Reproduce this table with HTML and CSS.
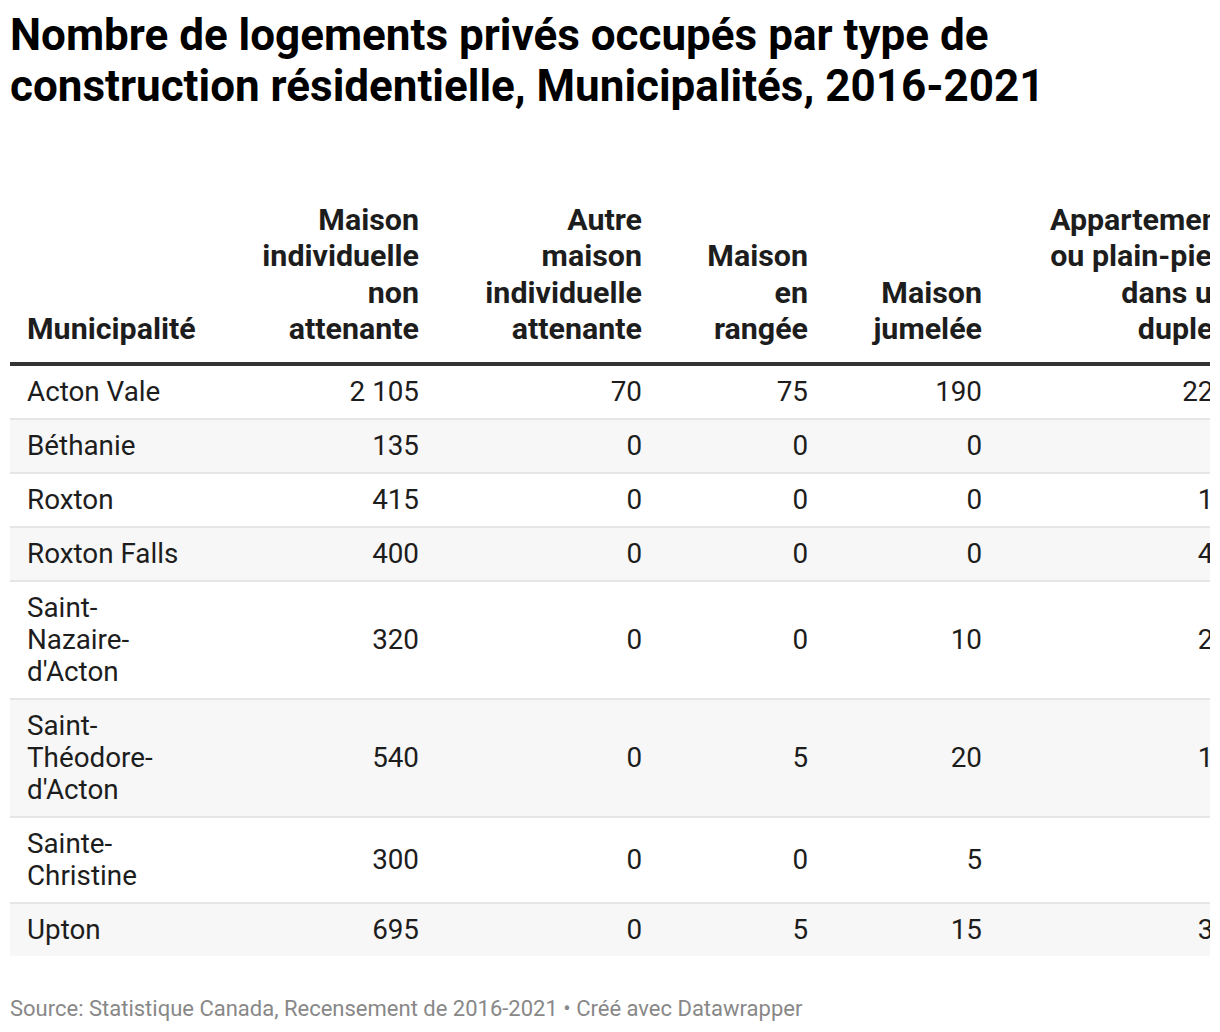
FILE: index.html
```html
<!DOCTYPE html>
<html lang="fr">
<head>
<meta charset="utf-8">
<title>Nombre de logements privés occupés</title>
<link rel="stylesheet" href="styles.css">
</head>
<body>
<div class="chart">
  <h1 class="title">Nombre de logements privés occupés par type de construction résidentielle, Municipalités, 2016-2021</h1>
  <div class="table-wrap">
    <table class="data">
      <colgroup>
        <col class="c-name">
        <col class="c-2">
        <col class="c-3">
        <col class="c-4">
        <col class="c-5">
        <col class="c-6">
      </colgroup>
      <thead>
        <tr>
          <th class="left">Municipalité</th>
          <th>Maison<br>individuelle<br>non<br>attenante</th>
          <th>Autre<br>maison<br>individuelle<br>attenante</th>
          <th>Maison<br>en<br>rangée</th>
          <th>Maison<br>jumelée</th>
          <th>Appartement<br>ou plain-pied<br>dans un<br>duplex</th>
        </tr>
      </thead>
      <tbody>
        <tr><td class="left"><span class="name">Acton Vale</span></td><td>2 105</td><td>70</td><td>75</td><td>190</td><td>225</td></tr>
        <tr><td class="left"><span class="name">Béthanie</span></td><td>135</td><td>0</td><td>0</td><td>0</td><td>0</td></tr>
        <tr><td class="left"><span class="name">Roxton</span></td><td>415</td><td>0</td><td>0</td><td>0</td><td>10</td></tr>
        <tr><td class="left"><span class="name">Roxton Falls</span></td><td>400</td><td>0</td><td>0</td><td>0</td><td>40</td></tr>
        <tr><td class="left"><span class="name">Saint-Nazaire-d'Acton</span></td><td>320</td><td>0</td><td>0</td><td>10</td><td>20</td></tr>
        <tr><td class="left"><span class="name">Saint-Théodore-d'Acton</span></td><td>540</td><td>0</td><td>5</td><td>20</td><td>15</td></tr>
        <tr><td class="left"><span class="name">Sainte-Christine</span></td><td>300</td><td>0</td><td>0</td><td>5</td><td>0</td></tr>
        <tr><td class="left"><span class="name">Upton</span></td><td>695</td><td>0</td><td>5</td><td>15</td><td>35</td></tr>
      </tbody>
    </table>
  </div>
  <p class="footer">Source: Statistique Canada, Recensement de 2016-2021 • Créé avec Datawrapper</p>
</div>
</body>
</html>
```

FILE: styles.css
```css
html, body {
  margin: 0;
  padding: 0;
  background: #ffffff;
}

body {
  font-family: Roboto, "Liberation Sans", Arial, sans-serif;
  color: #1d1d1d;
}

.chart {
  padding: 10px 10px 10px;
}

.title {
  margin: 0;
  font-size: 44px;
  line-height: 51px;
  font-weight: 700;
  color: #000000;
}

.table-wrap {
  width: 1200px;
  overflow: hidden;
  margin-top: 90px;
}

.data {
  width: 1219px;
  table-layout: fixed;
  border-collapse: collapse;
  font-size: 27.8px;
}

.c-name { width: 240px; }
.c-2 { width: 169px; }
.c-3 { width: 223px; }
.c-4 { width: 166px; }
.c-5 { width: 174px; }
.c-6 { width: 247px; }

.data th {
  font-size: 30.4px;
  font-weight: 700;
  line-height: 36.3px;
  text-align: right;
  vertical-align: bottom;
  padding: 0 0 15px 0;
  border-bottom: 4px solid #333333;
  color: #1d1d1d;
  white-space: nowrap;
}

.data td {
  line-height: 32px;
  text-align: right;
  vertical-align: middle;
  padding: 10px 0;
  border-bottom: 2px solid #e6e6e6;
  color: #1d1d1d;
  white-space: nowrap;
}

.data .left {
  text-align: left;
  padding-left: 17px;
  white-space: normal;
}

.data tbody tr:nth-child(even) td {
  background: #f7f7f7;
}

.data tbody tr:last-child td {
  border-bottom: none;
}

.name {
  display: inline-block;
  max-width: 165px;
}

.footer {
  margin: 40px 0 0;
  font-size: 22px;
  line-height: 26px;
  color: #888888;
}
```
